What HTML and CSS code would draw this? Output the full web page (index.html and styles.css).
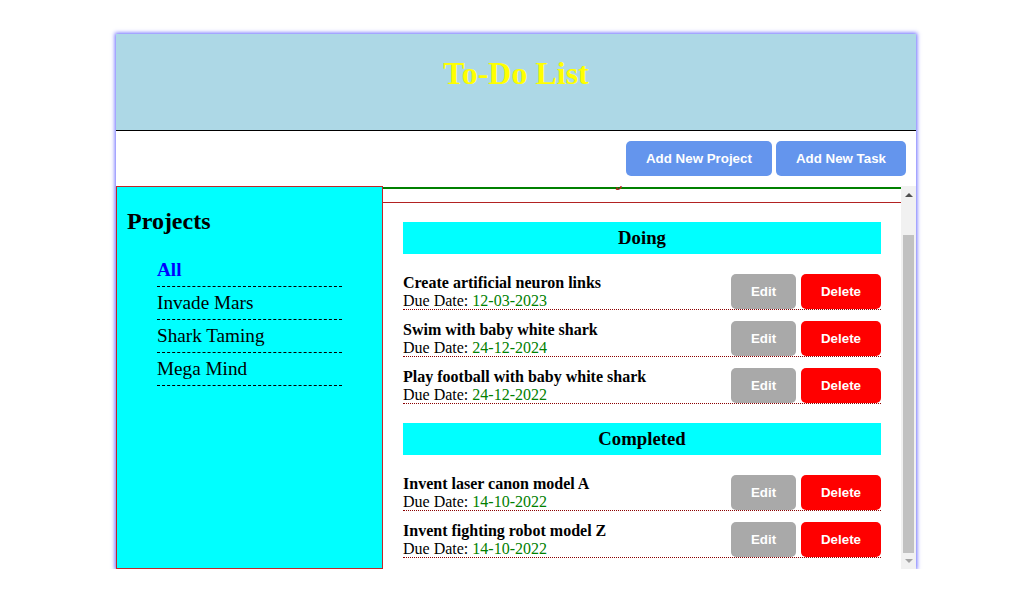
FILE: index.html
```html
<!DOCTYPE html>
<html lang="en">
<head>
<meta charset="utf-8">
<title>To-Do List</title>
<link rel="stylesheet" href="styles.css">
</head>
<body>
<div class="app">
  <header class="header">
    <h1 class="title">To-Do List</h1>
  </header>
  <div class="toolbar">
    <button class="btn btn-add">Add New Project</button>
    <button class="btn btn-add">Add New Task</button>
  </div>
  <main class="main">
    <aside class="sidebar">
      <h2 class="sidebar-title">Projects</h2>
      <ul class="project-list">
        <li class="project active">All</li>
        <li class="project">Invade Mars</li>
        <li class="project">Shark Taming</li>
        <li class="project">Mega Mind</li>
      </ul>
    </aside>
    <section class="content">
      <div class="scroll-area">
        <h2 class="content-title">My Tasks</h2>
        <div class="tasks">
          <div class="group">
            <h3 class="group-title">Doing</h3>
            <div class="task">
              <div class="task-info">
                <div class="task-name">Create artificial neuron links</div>
                <div class="task-due">Due Date: <span class="date">12-03-2023</span></div>
              </div>
              <div class="task-actions">
                <button class="btn btn-edit">Edit</button>
                <button class="btn btn-delete">Delete</button>
              </div>
            </div>
            <div class="task">
              <div class="task-info">
                <div class="task-name">Swim with baby white shark</div>
                <div class="task-due">Due Date: <span class="date">24-12-2024</span></div>
              </div>
              <div class="task-actions">
                <button class="btn btn-edit">Edit</button>
                <button class="btn btn-delete">Delete</button>
              </div>
            </div>
            <div class="task">
              <div class="task-info">
                <div class="task-name">Play football with baby white shark</div>
                <div class="task-due">Due Date: <span class="date">24-12-2022</span></div>
              </div>
              <div class="task-actions">
                <button class="btn btn-edit">Edit</button>
                <button class="btn btn-delete">Delete</button>
              </div>
            </div>
          </div>
          <div class="group">
            <h3 class="group-title">Completed</h3>
            <div class="task">
              <div class="task-info">
                <div class="task-name">Invent laser canon model A</div>
                <div class="task-due">Due Date: <span class="date">14-10-2022</span></div>
              </div>
              <div class="task-actions">
                <button class="btn btn-edit">Edit</button>
                <button class="btn btn-delete">Delete</button>
              </div>
            </div>
            <div class="task">
              <div class="task-info">
                <div class="task-name">Invent fighting robot model Z</div>
                <div class="task-due">Due Date: <span class="date">14-10-2022</span></div>
              </div>
              <div class="task-actions">
                <button class="btn btn-edit">Edit</button>
                <button class="btn btn-delete">Delete</button>
              </div>
            </div>
          </div>
        </div>
      </div>
      <div class="scrollbar" aria-hidden="true">
        <div class="sb-btn"><span class="arrow-up"></span></div>
        <div class="sb-track"><div class="sb-thumb"></div></div>
        <div class="sb-btn"><span class="arrow-down"></span></div>
      </div>
    </section>
  </main>
</div>
<script src="script.js"></script>
</body>
</html>
```

FILE: styles.css
```css
* { box-sizing: border-box; }

html, body {
  margin: 0;
  padding: 0;
  background: #ffffff;
}

body {
  font-family: "Liberation Serif", "Times New Roman", serif;
  font-size: 16px;
  color: #000;
}

.app {
  width: 800px;
  margin: 34px 0 0 116px;
  box-shadow: 0 0 4px 1px rgba(40, 40, 255, 0.7);
  background: #fff;
}

.header {
  height: 97px;
  background: #add8e6;
  border-bottom: 1px solid #000;
  padding-top: 21px;
}

.title {
  margin: 0;
  text-align: center;
  color: #ffff00;
  font-size: 32px;
  font-weight: bold;
  line-height: 37px;
}

.toolbar {
  display: flex;
  justify-content: flex-end;
  gap: 4px;
  padding: 10px 10px;
  height: 55px;
}

.btn {
  border: none;
  border-radius: 5px;
  height: 35px;
  padding: 0 20px;
  font-family: "Liberation Sans", Arial, sans-serif;
  font-size: 13.333px;
  font-weight: bold;
  color: #ffffff;
  cursor: pointer;
}

.btn-add { background: #6495ed; }
.btn-edit { background: #a9a9a9; width: 65px; padding: 0; }
.btn-delete { background: #ff0000; width: 80px; padding: 0; }

.main {
  display: flex;
  height: 383px;
}

.sidebar {
  width: 267px;
  flex: none;
  background: #00ffff;
  border: 1px solid #c0282a;
  padding: 0 10px;
}

.sidebar-title {
  margin: 20px 0 0;
  font-size: 24px;
  line-height: 28px;
}

.project-list {
  list-style: none;
  margin: 19px 0 0;
  padding: 0 30px;
}

.project {
  font-size: 19.2px;
  line-height: 22px;
  padding: 5px 0 5px;
  border-bottom: 1px dashed #000;
}

.project.active {
  color: #0000ff;
  font-weight: bold;
}

.content {
  flex: 1;
  display: flex;
  min-width: 0;
}

.scroll-area {
  flex: 1;
  min-width: 0;
  overflow: hidden;
}

.content-title {
  margin: 0;
  padding-top: 21px;
  text-align: center;
  font-size: 24px;
  line-height: 20px;
  color: #b22222;
  border-bottom: 2px solid #008000;
  margin-bottom: 13px;
}

.tasks {
  border-top: 1px solid #b22222;
  padding: 19px 20px 0;
}

.group + .group { padding-top: 8px; }

.group-title {
  margin: 0 0 20px;
  background: #00ffff;
  text-align: center;
  font-size: 18.72px;
  line-height: 22px;
  padding: 5px 0;
  height: 32px;
}

.task {
  display: flex;
  justify-content: space-between;
  align-items: flex-start;
  border-bottom: 1px dotted #8b0000;
  margin-bottom: 11px;
  height: 36px;
}

.task-name {
  font-weight: bold;
  line-height: 17px;
}

.task-due {
  line-height: 19px;
}

.date { color: #008000; }

.task-actions {
  display: flex;
  gap: 5px;
}

/* scrollbar */
.scrollbar {
  width: 15px;
  flex: none;
  display: flex;
  flex-direction: column;
  background: #f1f1f1;
  padding: 1px 0;
}

.sb-btn {
  height: 15px;
  display: flex;
  align-items: center;
  justify-content: center;
  flex: none;
}

.arrow-up {
  width: 0;
  height: 0;
  border-left: 4px solid transparent;
  border-right: 4px solid transparent;
  border-bottom: 4px solid #505050;
}

.arrow-down {
  width: 0;
  height: 0;
  border-left: 4px solid transparent;
  border-right: 4px solid transparent;
  border-top: 4px solid #a3a3a3;
}

.sb-track {
  flex: 1;
  padding: 0 2px;
}

.sb-thumb {
  margin-top: 33px;
  height: 318px;
  background: #c1c1c1;
}
```

FILE: script.js
```js
var pane = document.querySelector('.scroll-area');
pane.scrollTop = pane.scrollHeight;
```
